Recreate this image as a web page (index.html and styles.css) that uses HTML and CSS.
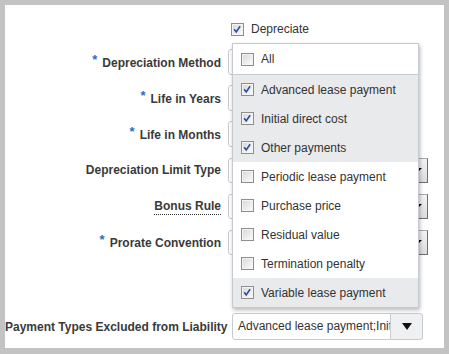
FILE: index.html
```html
<!DOCTYPE html>
<html>
<head>
<meta charset="utf-8">
<link rel="stylesheet" href="styles.css">
</head>
<body>
<div class="page">
  <div class="dep-row">
    <span class="cb checked"><svg viewBox="0 0 13 13" width="11" height="11"><path d="M2.5 6.2 L5 9.3 L9.6 2.6" fill="none" stroke="#2b4ea6" stroke-width="1.9"/></svg></span>
    <span class="dep-text">Depreciate</span>
  </div>
  <div class="form">
    <div class="row">
      <label class="lbl"><span class="req">*</span>Depreciation Method</label>
      <div class="field"><span class="tinput"></span></div>
    </div>
    <div class="row">
      <label class="lbl"><span class="req">*</span>Life in Years</label>
      <div class="field"><span class="tinput"></span></div>
    </div>
    <div class="row">
      <label class="lbl"><span class="req">*</span>Life in Months</label>
      <div class="field"><span class="tinput"></span></div>
    </div>
    <div class="row">
      <label class="lbl">Depreciation Limit Type</label>
      <div class="field"><span class="sinput"></span><span class="sbtn"><span class="tri"></span></span></div>
    </div>
    <div class="row">
      <label class="lbl"><span class="dotted">Bonus Rule</span></label>
      <div class="field"><span class="sinput"></span><span class="sbtn"><span class="tri"></span></span></div>
    </div>
    <div class="row">
      <label class="lbl"><span class="req">*</span>Prorate Convention</label>
      <div class="field"><span class="sinput"></span><span class="sbtn"><span class="tri"></span></span></div>
    </div>
  </div>
  <div class="pay-row">
    <label class="lbl pay-lbl">Payment Types Excluded from Liability</label>
    <div class="combo">
      <span class="combo-text">Advanced lease payment;Initial direct cost;Other payments;Variable lease payment</span>
      <span class="combo-btn"><span class="tri-big"></span></span>
    </div>
  </div>

  <div class="panel">
    <div class="item all"><span class="cb"></span><span>All</span></div>
    <div class="item sel"><span class="cb checked"><svg viewBox="0 0 13 13" width="11" height="11"><path d="M2.5 6.2 L5 9.3 L9.6 2.6" fill="none" stroke="#2b4ea6" stroke-width="1.9"/></svg></span><span>Advanced lease payment</span></div>
    <div class="item sel"><span class="cb checked"><svg viewBox="0 0 13 13" width="11" height="11"><path d="M2.5 6.2 L5 9.3 L9.6 2.6" fill="none" stroke="#2b4ea6" stroke-width="1.9"/></svg></span><span>Initial direct cost</span></div>
    <div class="item sel"><span class="cb checked"><svg viewBox="0 0 13 13" width="11" height="11"><path d="M2.5 6.2 L5 9.3 L9.6 2.6" fill="none" stroke="#2b4ea6" stroke-width="1.9"/></svg></span><span>Other payments</span></div>
    <div class="item"><span class="cb"></span><span>Periodic lease payment</span></div>
    <div class="item"><span class="cb"></span><span>Purchase price</span></div>
    <div class="item"><span class="cb"></span><span>Residual value</span></div>
    <div class="item"><span class="cb"></span><span>Termination penalty</span></div>
    <div class="item sel"><span class="cb checked"><svg viewBox="0 0 13 13" width="11" height="11"><path d="M2.5 6.2 L5 9.3 L9.6 2.6" fill="none" stroke="#2b4ea6" stroke-width="1.9"/></svg></span><span>Variable lease payment</span></div>
  </div>
</div>
</body>
</html>
```

FILE: styles.css
```css
html, body {
  margin: 0;
  padding: 0;
}
body {
  background: #c3c3c3;
  width: 449px;
  height: 354px;
  overflow: hidden;
  font-family: "Liberation Sans", Arial, sans-serif;
  font-size: 12px;
  color: #333;
}
.page {
  position: relative;
  margin: 5px 0 0 5px;
  width: 439px;
  height: 343px;
  background: #fff;
  padding-top: 9px;
  box-sizing: border-box;
}
.dep-row {
  height: 30px;
  display: flex;
  align-items: center;
  padding-left: 226px;
}
.dep-text {
  margin-left: 7px;
}
.cb {
  width: 13px;
  height: 13px;
  box-sizing: border-box;
  border: 1px solid #8e8e8e;
  background: linear-gradient(135deg, #d6d6d6 0%, #f2f2f2 70%, #fafafa 100%);
  box-shadow: inset 0 0 0 1px #f4f4f4;
  display: inline-flex;
  align-items: center;
  justify-content: center;
  flex: none;
}
.cb svg {
  display: block;
}
.form {
  display: flex;
  flex-direction: column;
}
.row {
  height: 36px;
  display: flex;
  align-items: center;
}
.lbl {
  width: 216px;
  text-align: right;
  font-weight: bold;
  color: #3a3a3a;
  flex: none;
  white-space: nowrap;
}
.req {
  color: #2a6cc4;
  font-size: 13px;
  position: relative;
  top: -3px;
  margin-right: 5px;
}
.dotted {
  border-bottom: 1px dotted #333;
  padding-bottom: 1px;
}
.field {
  margin-left: 7px;
  display: flex;
  align-items: center;
}
.tinput {
  width: 150px;
  height: 26px;
  box-sizing: border-box;
  border: 1px solid #c9c9c9;
  border-radius: 3px;
}
.sinput {
  width: 180px;
  height: 25px;
  box-sizing: border-box;
  border: 1px solid #c9c9c9;
  border-radius: 3px 0 0 3px;
}
.sbtn {
  width: 20px;
  height: 25px;
  box-sizing: border-box;
  border: 1px solid #a9a9a9;
  border-right-color: #6f6f6f;
  border-bottom-color: #6f6f6f;
  background: linear-gradient(#f4f4f4, #dcdcdc);
  display: flex;
  align-items: center;
  justify-content: center;
}
.tri {
  width: 0;
  height: 0;
  border-left: 4px solid transparent;
  border-right: 4px solid transparent;
  border-top: 4px solid #000;
}
.pay-row {
  margin-top: 53px;
  height: 27px;
  display: flex;
  align-items: center;
}
.pay-lbl {
  width: 218px;
}
.combo {
  margin-left: 9px;
  width: 191px;
  height: 27px;
  display: flex;
  box-sizing: border-box;
}
.combo-text {
  width: 159px;
  height: 27px;
  box-sizing: border-box;
  border: 1px solid #c8ccd0;
  border-radius: 3px 0 0 3px;
  padding: 0 4px 0 5px;
  line-height: 25px;
  white-space: nowrap;
  overflow: hidden;
  color: #333;
}
.combo-btn {
  width: 32px;
  height: 27px;
  box-sizing: border-box;
  border: 1px solid #c8ccd0;
  border-left: none;
  border-radius: 0 3px 3px 0;
  background: #eef0f2;
  display: flex;
  align-items: center;
  justify-content: center;
}
.tri-big {
  width: 0;
  height: 0;
  border-left: 5px solid transparent;
  border-right: 5px solid transparent;
  border-top: 7px solid #111;
  margin-left: 1px;
}
.panel {
  position: absolute;
  left: 227px;
  top: 38px;
  width: 187px;
  box-sizing: border-box;
  border: 1px solid #c5cad0;
  background: #fff;
  box-shadow: 1px 2px 4px rgba(0, 0, 0, 0.28);
  display: flex;
  flex-direction: column;
}
.item {
  height: 29px;
  display: flex;
  align-items: center;
  padding-left: 8px;
  gap: 7px;
  color: #333;
  white-space: nowrap;
}
.item.all {
  height: 30px;
  border-bottom: 1px solid #c5cad0;
}
.item.sel {
  background: #e9eaec;
}
```
